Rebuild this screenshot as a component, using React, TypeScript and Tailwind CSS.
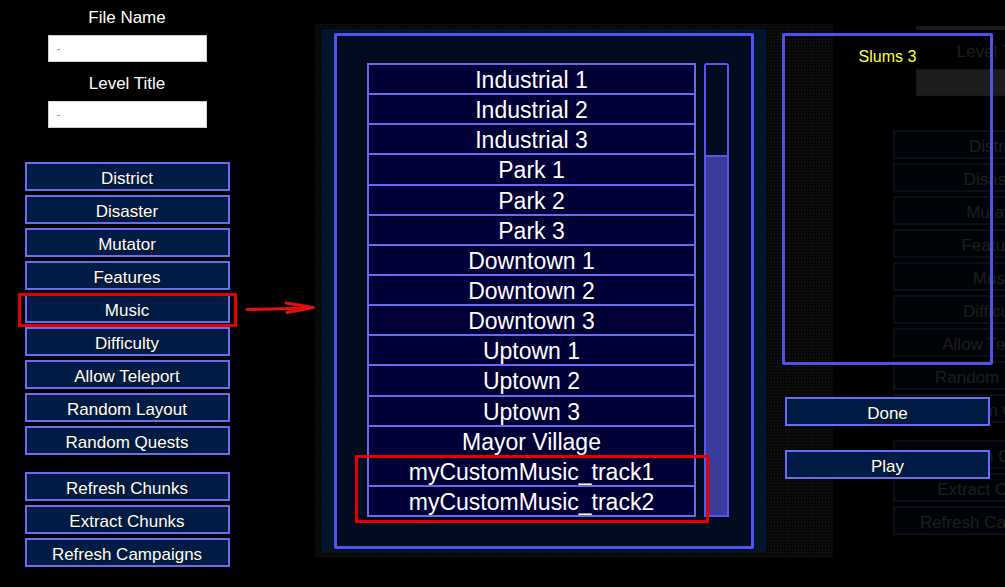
import type { ReactNode } from "react";

const tracks = [
  "Industrial 1",
  "Industrial 2",
  "Industrial 3",
  "Park 1",
  "Park 2",
  "Park 3",
  "Downtown 1",
  "Downtown 2",
  "Downtown 3",
  "Uptown 1",
  "Uptown 2",
  "Uptown 3",
  "Mayor Village",
  "myCustomMusic_track1",
  "myCustomMusic_track2",
];

const options = [
  "District",
  "Disaster",
  "Mutator",
  "Features",
  "Music",
  "Difficulty",
  "Allow Teleport",
  "Random Layout",
  "Random Quests",
];

const tools = ["Refresh Chunks", "Extract Chunks", "Refresh Campaigns"];

function MenuButton({ label }: { label: string }): ReactNode {
  return (
    <button
      type="button"
      className="flex h-[29px] w-[205px] items-center justify-center border-2 border-[#6b6bf0] bg-[#001c44] pt-[3px] text-[17px] leading-none text-white [text-shadow:1px_1px_0_#111]"
    >
      {label}
    </button>
  );
}

function Field({ label, first = false }: { label: string; first?: boolean }): ReactNode {
  return (
    <>
      <div className={`h-[20px] text-[17px] leading-[20px] text-white ${first ? "mt-[8px]" : "mt-[12px]"}`}>
        {label}
      </div>
      <div className="mt-[7px] flex h-[27px] w-[159px] items-center border border-[#cfcfcf] bg-white pl-[8px] text-[12px] text-[#9a9a9a]">
        -
      </div>
    </>
  );
}

function EditorColumn(): ReactNode {
  return (
    <div className="flex w-[254px] shrink-0 flex-col items-center">
      <Field label="File Name" first />
      <Field label="Level Title" />
      <div className="mt-[34px] flex flex-col gap-[4px]">
        {options.map((o) => (
          <MenuButton key={o} label={o} />
        ))}
      </div>
      <div className="mt-[17px] flex flex-col gap-[4px]">
        {tools.map((t) => (
          <MenuButton key={t} label={t} />
        ))}
      </div>
    </div>
  );
}

export default function App(): ReactNode {
  return (
    <div className="relative flex h-[587px] w-[1005px] overflow-hidden bg-black font-['Liberation_Sans',Arial,sans-serif]">
      {/* ghosted editor behind the right-hand window */}
      <div className="pointer-events-none absolute left-[868px] top-[26px] h-[561px] w-[254px] overflow-hidden opacity-[0.11]">
        <div className="mt-[-58px]">
          <EditorColumn />
        </div>
      </div>

      <EditorColumn />

      {/* annotation: Music highlighted */}
      <div className="pointer-events-none absolute left-[18px] top-[293px] h-[34px] w-[219px] border-[3px] border-[#e60000]" />
      <svg
        className="pointer-events-none absolute left-[244px] top-[298px]"
        width="74"
        height="20"
        viewBox="0 0 74 20"
        fill="none"
      >
        <path d="M3 11.5 C25 11 48 10.5 69 9.5" stroke="#e01010" strokeWidth="3.2" strokeLinecap="round" />
        <path d="M42 5 C52 6.5 61 8 69 9.5 C61 11.5 52 13 43 14.5" stroke="#e01010" strokeWidth="3" strokeLinecap="round" strokeLinejoin="round" />
      </svg>

      {/* music picker window */}
      <div className="relative ml-[61px] mt-[24px] h-[534px] w-[518px] shrink-0 bg-[#050505] bg-[linear-gradient(to_right,#0e0e0e_1px,transparent_1px),linear-gradient(to_bottom,#0e0e0e_1px,transparent_1px)] pl-[7px] pt-[5px] [background-size:3px_3px]">
        <div className="h-[523px] w-[444px] bg-[#03152e] pl-[12px] pt-[4px]">
          <div className="flex h-[516px] w-[420px] rounded-[2px] border-[3px] border-[#5252f0] bg-[#020c20] pl-[30px] pt-[27px]">
            <div className="flex h-[454px] w-[329px] flex-col gap-[2px] bg-[#6a6af0] p-[2px]">
              {tracks.map((t) => (
                <div
                  key={t}
                  className="flex flex-1 items-center justify-center bg-[#000036] pt-[3px] text-[23px] leading-none text-white"
                >
                  {t}
                </div>
              ))}
            </div>
            <div className="ml-[8px] flex h-[454px] w-[25px] flex-col rounded-t-[3px] border-2 border-[#5757ee]">
              <div className="h-[90px] bg-[#020c20]" />
              <div className="flex-1 border-t-2 border-[#5757ee] bg-[#3b3b9c]" />
            </div>
          </div>
        </div>
        {/* annotation: custom tracks highlighted */}
        <div className="pointer-events-none absolute left-[40px] top-[431px] h-[68px] w-[354px] border-[3px] border-[#e60000]" />
      </div>

      {/* right-hand window */}
      <div className="relative ml-[-51px] mt-[33px] flex w-[223px] shrink-0 flex-col">
        <div className="flex h-[332px] w-[211px] justify-center rounded-[2px] border-[3px] border-[#5050f0] pt-[13px]">
          <span className="text-[16px] leading-none text-[#ffff33]">Slums 3</span>
        </div>
        <div className="ml-[3px] mt-[32px]">
          <MenuButton label="Done" />
        </div>
        <div className="ml-[3px] mt-[24px]">
          <MenuButton label="Play" />
        </div>
      </div>
    </div>
  );
}
